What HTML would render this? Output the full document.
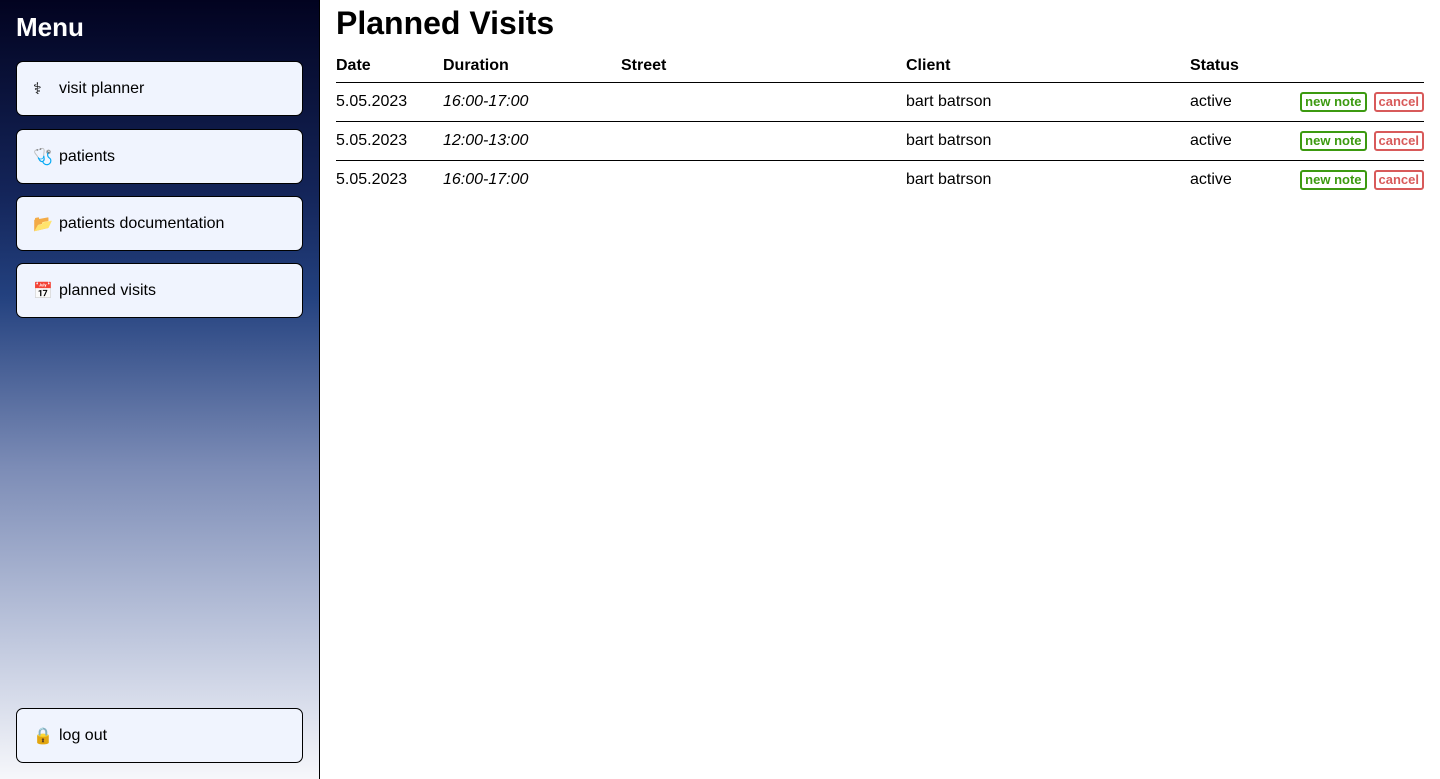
<!DOCTYPE html>
<html><head><style>
*{box-sizing:border-box;margin:0;padding:0}
body{width:1440px;height:779px;font-family:"Liberation Sans",Arial,sans-serif;background:#fff;position:relative;overflow:hidden}
.side{position:absolute;left:0;top:0;width:320px;height:779px;border-right:1px solid #000;background:linear-gradient(to bottom,#020320 0%,#14255a 25%,#23417f 38%,#7c8cb6 60%,#b9c2da 80%,#f6f7fb 100%)}
.side h2{position:absolute;left:16px;top:12px;color:#fff;font-size:26px;font-weight:bold}
.btn{position:absolute;left:16px;width:287px;height:55px;background:#f0f4fe;border:1px solid #000;border-radius:7px;font-size:16px;color:#000;display:flex;align-items:center;padding-left:16px}
.btn .i{width:26px;display:inline-block;font-size:16px}
h1{position:absolute;left:336px;top:5px;font-size:32px;font-weight:bold}
table{position:absolute;left:336px;top:51px;width:1088px;border-collapse:collapse;font-size:16px}
th{text-align:left;height:31px;border-bottom:1px solid #000;font-weight:bold;padding:0}
td{height:39px;border-bottom:1px solid #000;padding:0}
tr:last-child td{border-bottom:none}
.a{display:inline-block;font-size:13px;font-weight:bold;border:2px solid;border-radius:3px;padding:0 3px;line-height:16px}
.g{color:#3c9a10;border-color:#3c9a10;margin-right:7px}
.r{color:#d85a5a;border-color:#d85a5a}
</style></head><body>
<div class="side">
<h2>Menu</h2>
<div class="btn" style="top:61px"><span class="i">⚕</span>visit planner</div>
<div class="btn" style="top:129px"><span class="i">🩺</span>patients</div>
<div class="btn" style="top:196px"><span class="i">📂</span>patients documentation</div>
<div class="btn" style="top:263px"><span class="i">📅</span>planned visits</div>
<div class="btn" style="top:708px"><span class="i">🔒</span>log out</div>
</div>
<h1>Planned Visits</h1>
<table>
<tr><th style="width:107px">Date</th><th style="width:178px">Duration</th><th style="width:285px">Street</th><th style="width:284px">Client</th><th style="width:106px">Status</th><th></th></tr>
<tr><td>5.05.2023</td><td><i>16:00-17:00</i></td><td></td><td>bart batrson</td><td>active</td><td style="text-align:right"><span class="a g">new note</span><span class="a r">cancel</span></td></tr>
<tr><td>5.05.2023</td><td><i>12:00-13:00</i></td><td></td><td>bart batrson</td><td>active</td><td style="text-align:right"><span class="a g">new note</span><span class="a r">cancel</span></td></tr>
<tr><td>5.05.2023</td><td><i>16:00-17:00</i></td><td></td><td>bart batrson</td><td>active</td><td style="text-align:right"><span class="a g">new note</span><span class="a r">cancel</span></td></tr>
</table>
</body></html>
